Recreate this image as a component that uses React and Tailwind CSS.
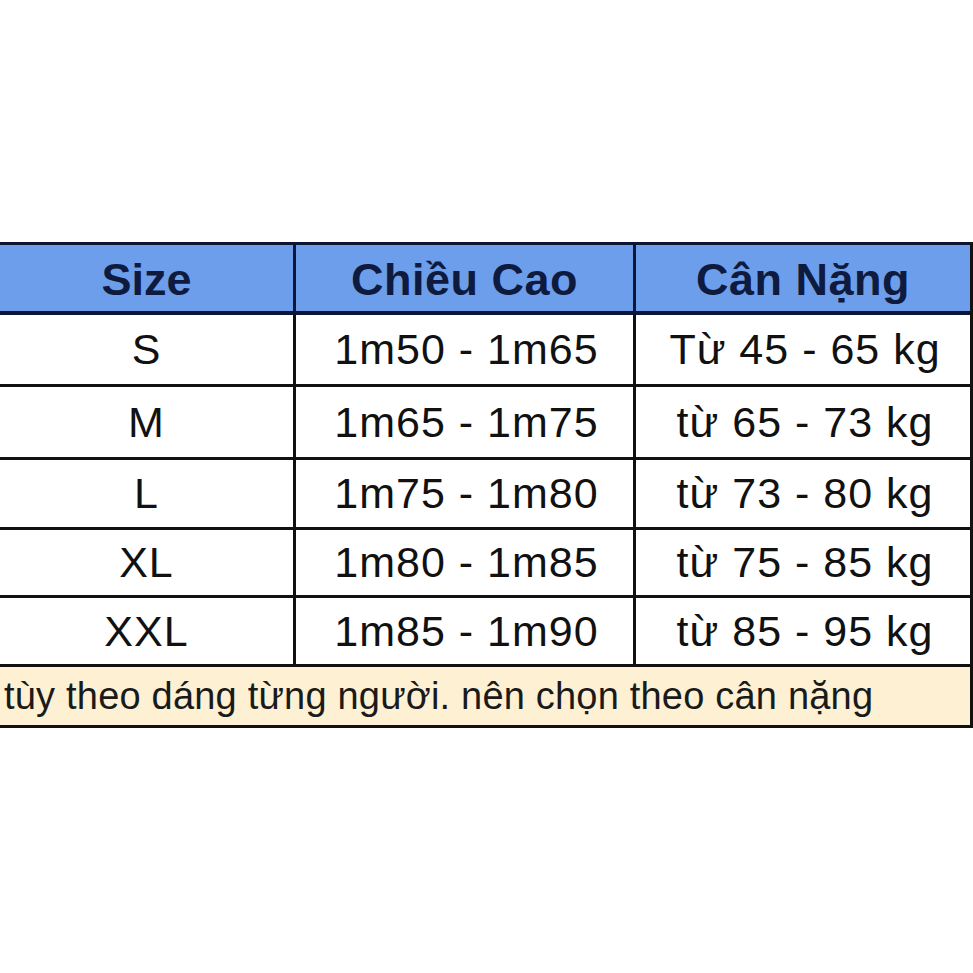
import React from "react";

const rows = [
  { s: "S", h: "1m50 - 1m65", w: "Từ 45 - 65 kg", hgt: "h-[69px]" },
  { s: "M", h: "1m65 - 1m75", w: "từ 65 - 73 kg", hgt: "h-[70px]" },
  { s: "L", h: "1m75 - 1m80", w: "từ 73 - 80 kg", hgt: "h-[67px]" },
  { s: "XL", h: "1m80 - 1m85", w: "từ 75 - 85 kg", hgt: "h-[65px]" },
  { s: "XXL", h: "1m85 - 1m90", w: "từ 85 - 95 kg", hgt: "h-[66px]" },
];

export default function App() {
  return (
    <div
      className="w-[973px] h-[973px] bg-white pt-[242px]"
      style={{ fontFamily: '"Liberation Sans", Arial, sans-serif' }}
    >
      <div className="w-[973px] border-t-[3px] border-r-[3px] border-b-[3px] border-t-[#0d1533] border-r-[#111] border-b-[#111]">
        {/* header */}
        <div className="flex h-[70px] bg-[#6d9eeb] border-b-4 border-[#0d1538] text-[#0e1a3e] font-bold text-[45px]">
          <div className="w-[296px] border-r-[3px] border-[#0d1538] flex items-center justify-center pt-[4px]">
            Size
          </div>
          <div className="w-[340px] border-r-[3px] border-[#0d1538] flex items-center justify-center pt-[4px] tracking-[0.5px]">
            Chiều Cao
          </div>
          <div className="flex-1 flex items-center justify-center pt-[4px] tracking-[0.5px]">
            Cân Nặng
          </div>
        </div>
        {rows.map((r) => (
          <div
            key={r.s}
            className={`flex ${r.hgt} box-content border-b-[3px] border-[#111] text-[#111] text-[43px] tracking-[1px]`}
          >
            <div className="w-[296px] border-r-[3px] border-[#111] flex items-center justify-center">
              {r.s}
            </div>
            <div className="w-[340px] border-r-[3px] border-[#111] flex items-center justify-center pl-[4px]">
              {r.h}
            </div>
            <div className="flex-1 flex items-center justify-center pl-[4px]">
              {r.w}
            </div>
          </div>
        ))}
        <div className="h-[58px] bg-[#fdf0d3] flex items-center pl-[4px] text-[#1a1a1a] text-[38px] tracking-[0.2px]">
          tùy theo dáng từng người. nên chọn theo cân nặng
        </div>
      </div>
    </div>
  );
}
